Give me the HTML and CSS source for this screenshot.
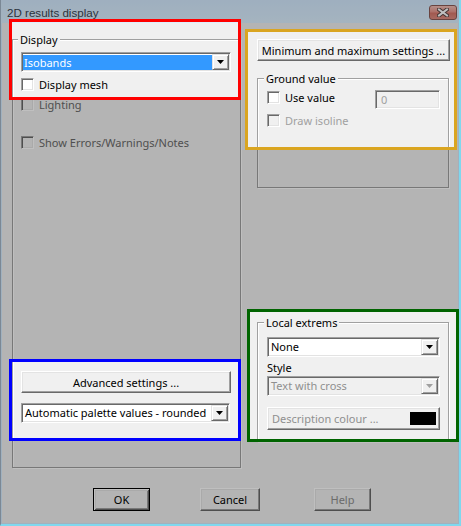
FILE: index.html
```html
<!DOCTYPE html>
<html>
<head>
<meta charset="utf-8">
<title>2D results display</title>
<link rel="stylesheet" href="styles.css">
</head>
<body>
<div class="window">
  <div class="titlebar">
    <span class="title">2D results display</span>
    <span class="close">
      <svg width="12" height="9" viewBox="0 0 12 9">
        <path d="M2 1.5L10 7.5M10 1.5L2 7.5" stroke="#5a4644" stroke-width="4" stroke-linecap="square"/>
        <path d="M2 1.5L10 7.5M10 1.5L2 7.5" stroke="#ffffff" stroke-width="2" stroke-linecap="square"/>
      </svg>
    </span>
  </div>
  <div class="client">
    <div class="panels">
      <div class="group left-group">
        <span class="group-title">Display</span>
        <div class="combo sel-combo">
          <span class="combo-val sel">Isobands</span>
          <span class="drop"><svg width="7" height="4" viewBox="0 0 7 4"><path d="M0 0H7L3.5 4Z" fill="#000"/></svg></span>
        </div>
        <div class="check mesh"><span class="box"></span><span>Display mesh</span></div>
        <div class="check lighting disabled-dark"><span class="box off"></span><span>Lighting</span></div>
        <div class="check errors disabled-dark"><span class="box off"></span><span>Show Errors/Warnings/Notes</span></div>
        <div class="left-bottom">
          <div class="btn adv">Advanced settings ...</div>
          <div class="combo palette">
            <span class="combo-val">Automatic palette values - rounded</span>
            <span class="drop"><svg width="7" height="4" viewBox="0 0 7 4"><path d="M0 0H7L3.5 4Z" fill="#000"/></svg></span>
          </div>
        </div>
      </div>
      <div class="right-col">
        <div class="btn minmax">Minimum and maximum settings ...</div>
        <div class="group ground">
          <span class="group-title">Ground value</span>
          <div class="ground-row">
            <div class="check use"><span class="box"></span><span>Use value</span></div>
            <div class="edit">0</div>
          </div>
          <div class="check draw disabled"><span class="box off"></span><span>Draw isoline</span></div>
        </div>
        <div class="group extrems">
          <span class="group-title">Local extrems</span>
          <div class="combo none-combo">
            <span class="combo-val">None</span>
            <span class="drop"><svg width="7" height="4" viewBox="0 0 7 4"><path d="M0 0H7L3.5 4Z" fill="#000"/></svg></span>
          </div>
          <div class="style-label">Style</div>
          <div class="combo style-combo off">
            <span class="combo-val">Text with cross</span>
            <span class="drop"><svg width="7" height="4" viewBox="0 0 7 4"><path d="M0 0H7L3.5 4Z" fill="#a0a0a0"/></svg></span>
          </div>
          <div class="btn desc off">
            <span class="desc-text">Description colour ...</span>
            <span class="swatch"></span>
          </div>
        </div>
      </div>
    </div>
    <div class="buttons">
      <div class="btn dlg default">OK</div>
      <div class="btn dlg cancel">Cancel</div>
      <div class="btn dlg help off">Help</div>
    </div>
  </div>

  <svg class="dim" width="461" height="526" viewBox="0 0 461 526">
    <path fill="rgba(0,0,0,0.25)" fill-rule="evenodd"
      d="M0 0H461V526H0Z M9 19H241V100H9Z M245 29H457V150H245Z M9 359H241V441H9Z M247 309H459V442H247Z"/>
  </svg>
  <div class="hl hl-red"></div>
  <div class="hl hl-orange"></div>
  <div class="hl hl-blue"></div>
  <div class="hl hl-green"></div>
</div>
</body>
</html>
```

FILE: styles.css
```css
html, body {
  margin: 0;
  padding: 0;
}

body {
  font-family: "Noto Sans", "Liberation Sans", Arial, sans-serif;
  font-size: 11px;
  color: #000;
}

.window {
  position: relative;
  width: 461px;
  height: 526px;
  box-sizing: border-box;
  border-left: 1px solid #7b8895;
  border-right: 2px solid #7fd8ee;
  border-bottom: 2px solid #7fd8ee;
  background: #d6ecff;
  display: flex;
  flex-direction: column;
  overflow: hidden;
}

.titlebar {
  height: 23px;
  flex: none;
  display: flex;
  align-items: flex-start;
  padding: 0 2px 0 6px;
  background: linear-gradient(#d4eaff, #dcf0ff);
}

.title {
  margin-top: 5px;
  line-height: 16px;
  font-family: "Liberation Sans", Arial, sans-serif;
  font-size: 11.6px;
  color: #3a4653;
}

.close {
  margin-left: auto;
  margin-top: 5px;
  width: 28px;
  height: 15px;
  box-sizing: border-box;
  border: 1px solid #8c5a55;
  border-radius: 3px;
  background: linear-gradient(#f2c0b8, #e8968c 45%, #d8786c 55%, #e08c80);
  display: flex;
  align-items: center;
  justify-content: center;
}

.close svg {
  display: block;
}

.client {
  flex: 1;
  margin: 0 1px 1px 1px;
  background: #f0f0f0;
  display: flex;
  flex-direction: column;
  padding-left: 10px;
}

.panels {
  display: flex;
  align-items: flex-start;
  padding-top: 16px;
}

.group {
  box-sizing: border-box;
  border: 1px solid #a0a0a0;
  box-shadow: 1px 1px 0 #fff, inset 1px 1px 0 #fff;
  display: flex;
  flex-direction: column;
}

.group-title {
  align-self: flex-start;
  margin: -7px 0 0 -3px;
  padding: 0 2px;
  line-height: 13px;
  background: #f0f0f0;
  white-space: nowrap;
}

.left-group {
  width: 229px;
  height: 429px;
  padding: 0 9px 44px 8px;
}

.sel-combo {
  margin-top: 6px;
}

/* combobox */
.combo {
  height: 20px;
  box-sizing: border-box;
  display: flex;
  border: 1px solid;
  border-color: #a0a0a0 #ffffff #ffffff #a0a0a0;
  box-shadow: inset 1px 1px 0 #696969, inset -1px -1px 0 #e3e3e3;
  background: #fff;
  padding: 1px;
}

.combo-val {
  flex: 1;
  min-width: 0;
  line-height: 16px;
  padding-left: 2px;
  white-space: nowrap;
  overflow: hidden;
}

.combo-val.sel {
  background: #3399ff;
  color: #fff;
  margin-top: 1px;
  line-height: 15px;
  padding-left: 1px;
}

.combo.off {
  background: #f0f0f0;
  color: #8f8f8f;
}

.drop {
  width: 17px;
  height: 16px;
  flex: none;
  box-sizing: border-box;
  border: 1px solid;
  border-color: #e3e3e3 #696969 #696969 #e3e3e3;
  box-shadow: inset 1px 1px 0 #fff, inset -1px -1px 0 #a0a0a0;
  background: #f0f0f0;
  display: flex;
  align-items: center;
  justify-content: center;
}

.drop svg {
  display: block;
}

/* checkbox */
.check {
  display: flex;
  align-items: center;
  gap: 5px;
  height: 13px;
  line-height: 13px;
  white-space: nowrap;
}

.box {
  width: 13px;
  height: 13px;
  flex: none;
  box-sizing: border-box;
  border: 1px solid;
  border-color: #a0a0a0 #ffffff #ffffff #a0a0a0;
  box-shadow: inset 1px 1px 0 #696969, inset -1px -1px 0 #e3e3e3;
  background: #fff;
}

.box.off {
  background: #f0f0f0;
}

.mesh {
  margin-top: 6px;
}

.lighting {
  margin-top: 7px;
}

.errors {
  margin-top: 25px;
}

.disabled-dark {
  color: #6a6a6a;
}

.disabled {
  color: #a0a0a0;
}

.left-bottom {
  margin-top: auto;
  display: flex;
  flex-direction: column;
}

/* buttons */
.btn {
  box-sizing: border-box;
  height: 22px;
  border: 1px solid;
  border-color: #ffffff #696969 #696969 #ffffff;
  box-shadow: inset -1px -1px 0 #a0a0a0, inset 1px 1px 0 #e3e3e3;
  background: #f0f0f0;
  display: flex;
  align-items: center;
  justify-content: center;
  white-space: nowrap;
}

.btn.off {
  color: #8f8f8f;
}

.adv {
  width: 210px;
  margin-bottom: 10px;
}

.palette {
  width: 209px;
}

.right-col {
  margin-left: 16px;
  width: 193px;
  display: flex;
  flex-direction: column;
}

.minmax {
  width: 193px;
}

.ground {
  width: 192px;
  height: 110px;
  margin-top: 17px;
  padding: 0 8px 0 9px;
}

.ground-row {
  display: flex;
  align-items: flex-start;
  margin-top: 5px;
}

.use {
  margin-top: 1px;
}

.edit {
  margin-left: auto;
  width: 65px;
  height: 19px;
  box-sizing: border-box;
  border: 1px solid;
  border-color: #a0a0a0 #ffffff #ffffff #a0a0a0;
  box-shadow: inset 1px 1px 0 #696969, inset -1px -1px 0 #e3e3e3;
  background: #f0f0f0;
  color: #a0a0a0;
  line-height: 17px;
  padding-left: 5px;
}

.draw {
  margin-top: 5px;
}

.extrems {
  width: 192px;
  height: 120px;
  margin-top: 134px;
  padding: 0 8px 0 9px;
}

.none-combo {
  margin-top: 8px;
}

.style-label {
  margin-top: 4px;
  line-height: 13px;
}

.style-combo {
  margin-top: 2px;
}

.desc {
  margin-top: 11px;
  height: 23px;
  justify-content: flex-start;
  padding: 0 3px 0 4px;
}

.swatch {
  margin-left: auto;
  width: 26px;
  height: 13px;
  background: #000;
}

.buttons {
  display: flex;
  margin-top: 20px;
}

.dlg {
  height: 23px;
  width: 57px;
}

.default {
  margin-left: 81px;
  border: 1px solid #000;
  box-shadow: inset 1px 1px 0 #fff, inset -1px -1px 0 #696969, inset 2px 2px 0 #e3e3e3, inset -2px -2px 0 #a0a0a0;
}

.cancel {
  margin-left: 50px;
  width: 60px;
}

.help {
  margin-left: 54px;
}

/* dimming overlay & highlight frames */
.dim {
  position: absolute;
  left: -1px;
  top: 0;
  pointer-events: none;
}

.hl {
  position: absolute;
  box-sizing: border-box;
  border: 3px solid;
  pointer-events: none;
}

.hl-red {
  left: 8px;
  top: 19px;
  width: 232px;
  height: 81px;
  border-color: #ff0000;
}

.hl-orange {
  left: 244px;
  top: 29px;
  width: 212px;
  height: 121px;
  border-color: #daa520;
}

.hl-blue {
  left: 8px;
  top: 359px;
  width: 232px;
  height: 82px;
  border-color: #0000ff;
}

.hl-green {
  left: 246px;
  top: 309px;
  width: 212px;
  height: 133px;
  border-color: #006400;
}
```
